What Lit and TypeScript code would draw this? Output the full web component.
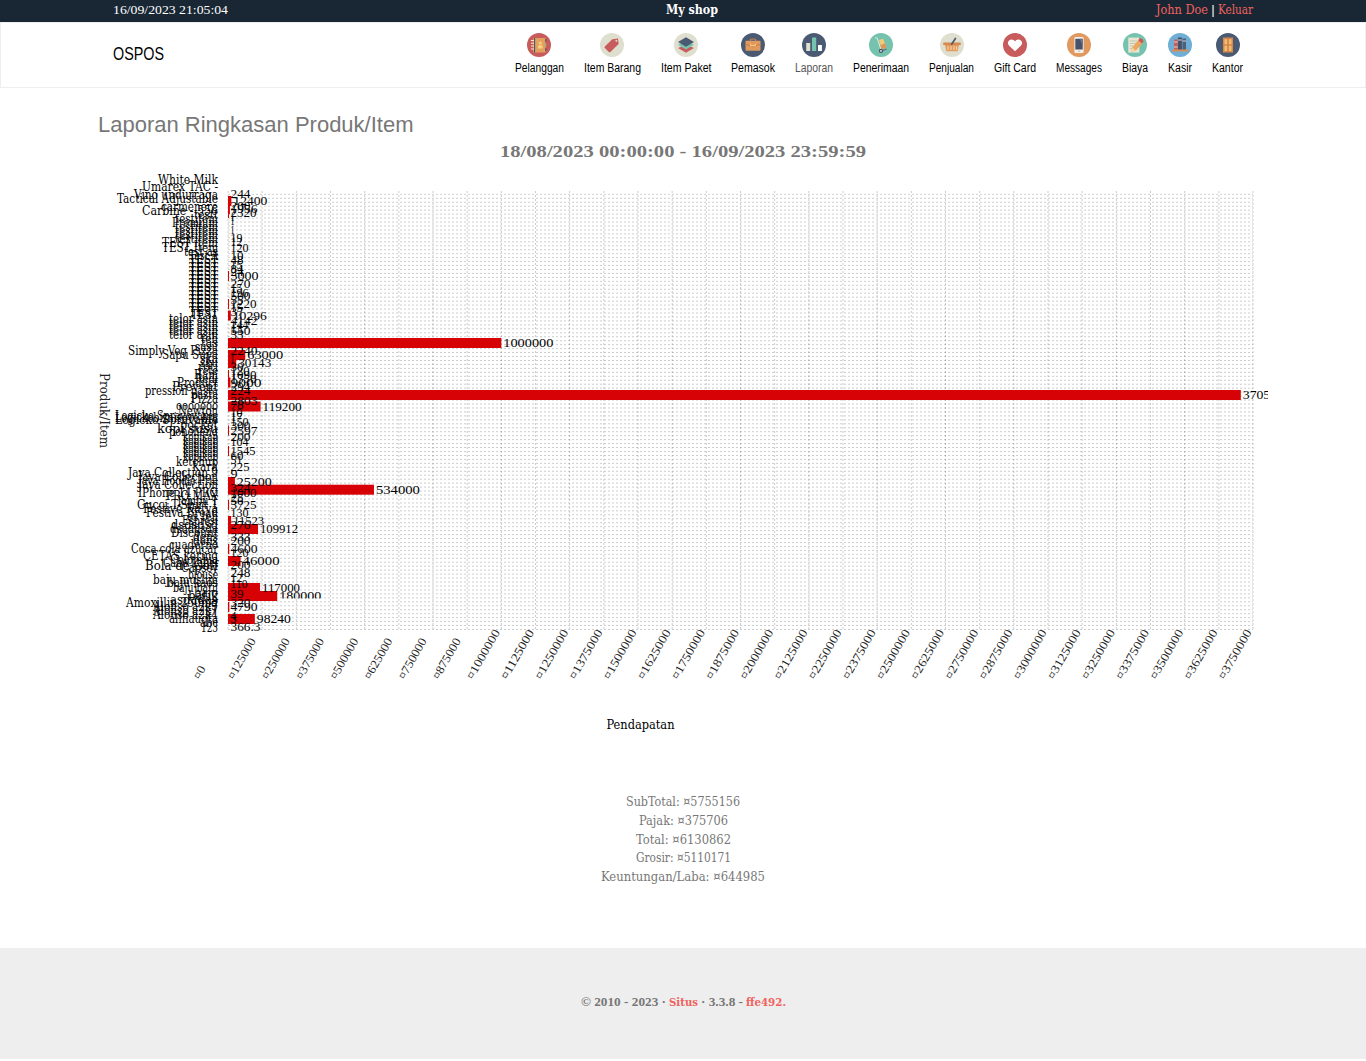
import { LitElement, html, svg, css } from "lit";
import { customElement } from "lit/decorators.js";

const bag = svg`<path d="M9.4 8V6.1h5.2V8" fill="none" stroke="#c9874d"/><rect x="4.5" y="7.7" width="15" height="10" rx=".8" fill="#e0995e"/><path d="M4.5 11.5q7.5 3 15 0" stroke="#c97d43" fill="none"/><path d="M9.5 10.8v1.7h5v-1.7" stroke="#f7ce79" fill="none"/>`;

const NAV: { name: string; w: number; bg: string; art: unknown; dim?: boolean }[] = [
  { name: "Pelanggan", w: 49, bg: "#c85c5c", art: svg`<rect x="6" y="5" width="12.5" height="14.5" rx=".8" fill="#e3a05f"/><path d="M7.5 5v14.5" stroke="#4b566d" stroke-width="1.2"/><path d="M4 7.5h3M4 10.2h3M4 13h3M4 16h3" stroke="#f1ead8"/><path d="M18.8 6v3M18.8 15v3" stroke="#4b566d"/><path d="M18.8 10.5v3" stroke="#75c3ae"/><circle cx="13.3" cy="10" r="1.6" fill="#f8cf7b"/><path d="M11 15.5v-2.5q2.3-2 4.6 0v2.5z" fill="#f8cf7b"/>` },
  { name: "Item Barang", w: 57, bg: "#dfdfcf", art: svg`<path d="M12.3 6.2 18 5.5l.6 5.4-8.2 8.1q-.8.7-1.6 0l-4-4q-.7-.8 0-1.6z" fill="#c85c5c"/><circle cx="16.4" cy="7.8" r="1" fill="#dfdfcf"/>` },
  { name: "Item Paket", w: 50.5, bg: "#dfdfcf", art: svg`<path d="m4 15 8-3.5 8 3.5-8 4.7z" fill="#c85c5c"/><path d="m4 11.8 8-4 8 4-8 4.7z" fill="#75c3ae"/><path d="m4 8.9 8-4.6 8 4.6-8 4.8z" fill="#4b5a73"/>` },
  { name: "Pemasok", w: 44, bg: "#4b5a73", art: bag },
  { name: "Laporan", w: 38, bg: "#4b5a73", dim: true, art: svg`<rect x="4.2" y="10" width="4" height="8" fill="#dfdfcf"/><rect x="10" y="4.5" width="4.2" height="13.5" fill="#75c3ae"/><rect x="16" y="12" width="3.9" height="6" fill="#fff"/>` },
  { name: "Penerimaan", w: 56, bg: "#75c3ae", art: svg`<path d="m10 7 4-1.2 2.2 5.2-4.5 1.8z" fill="#f2cc72"/><path d="m11.2 12.2 4.5-2 2 4.5-5 1.8z" fill="#e2975a"/><path d="M6.2 4.7 8.2 5.2 12 16.8" fill="none" stroke="#eceadc"/><path d="m13 17.8 4.6-1.7" stroke="#555f6e"/><circle cx="12" cy="17.9" r="1.5" fill="#eee" stroke="#41506a" stroke-width="1.2"/>` },
  { name: "Penjualan", w: 45, bg: "#dfdfcf", art: svg`<path d="M4.8 11h14.4l-1.5 7.2H6.3z" fill="#e39a5f"/><rect x="3.2" y="9.4" width="17.6" height="2.7" rx=".5" fill="#d78a4d"/><path d="M8 13.2v3.8M11 13.2v3.8M14 13.2v3.8M16.7 13.2v3.8" stroke="#f6ddb2"/><path d="m11.8 11 3.6-5.5" stroke="#4b5a73" stroke-width="1.7" stroke-linecap="round"/>` },
  { name: "Gift Card", w: 42, bg: "#c85c5c", art: svg`<path d="M12 18.2 6.4 13Q3.6 10 6 7.6q3.2-2.4 6 .7 2.8-3.1 6-.7 2.4 2.4-.4 5.4z" fill="#fff"/>` },
  { name: "Messages", w: 46, bg: "#e0995e", art: svg`<rect x="7.4" y="4" width="9.2" height="16" rx="1.3" fill="#f3f0ec"/><path d="M8.3 5.8h7.4v10.7H8.3z" fill="#46526b"/><path d="m12.5 5.8 3.2 7V5.8z" fill="#6b7588"/><circle cx="12" cy="18.2" r=".7" fill="#a9acb0"/>` },
  { name: "Biaya", w: 26, bg: "#75c3ae", art: svg`<path d="M5.3 4.6h11v15h-11z" fill="#e8e5d3"/><path d="M7 8h7M7 10.5h6M7 13h3M7 15.5h3" stroke="#b9baa7" stroke-width=".8"/><path d="m9.2 14.5 6.7-8.1 4 3.4-7 7.8-4.5 1.1z" fill="#eda65d"/><path d="m15.2 7.2 1.7-2.1q2.9.3 3.8 3.1l-1.8 2.2z" fill="#c85c5c"/><path d="m9.2 14.5 3.4 3.1-4.2 1.1z" fill="#f5d6a0"/>` },
  { name: "Kasir", w: 24, bg: "#6fafd6", art: svg`<rect x="6" y="6.5" width="3.7" height="10.5" fill="#c85c5c"/><rect x="9.9" y="4.5" width="4" height="12.5" fill="#44516a"/><rect x="14.4" y="5.5" width="3.6" height="11.5" fill="#50607a"/><path d="M6 9h3.7M6 14h3.7M9.9 7h4M14.4 8h3.6" stroke="#eee" stroke-width=".8"/><rect x="3.8" y="16.5" width="16.4" height="2" fill="#d98f52"/>` },
  { name: "Kantor", w: 31, bg: "#4b5a73", art: svg`<rect x="7" y="4.5" width="10" height="15" fill="#d8884a"/><path d="M8.5 6.2h2.8v5H8.5zm4.2 0h2.8v5h-2.8zm-4.2 6.5h2.8v5.2H8.5zm4.2 0h2.8v5.2h-2.8z" fill="#f3bd71"/><path d="M12 4.5v15" stroke="#c27a42" stroke-width=".6"/>` },
];

/* Rows of the chart: vertical centre, text, drawn width. */
type Row = [number, string, number];

const LABELS: Row[] = [
  [180, "White Milk", 60], [187, "Umarex TAC -", 76], [195, "Vino undurraga", 84], [199, "Tactical Adjustable", 101],
  [207, "carmenere", 57], [211, "Carbine - 556", 76], [215, "testt", 24], [219, "testitem", 43], [223, "Premium", 46],
  [227, "testitem", 43], [231, "testitem", 43], [235, "testitem", 43], [239, "testitem", 43], [243, "TEST item", 56],
  [248, "TEST Item", 56], [252, "test as", 34], [256, "Test A", 29],
  [260, "TEST", 29], [264, "TEST", 29], [268, "TEST", 29], [272, "TEST", 29], [276, "TEST", 29], [280, "TEST", 29],
  [284, "TEST", 29], [288, "TEST", 29], [292, "TEST", 29], [296, "TEST", 29], [300, "TEST", 29], [304, "TEST", 29],
  [308, "TEST", 29], [312, "TEST", 29], [315, "TEST", 27], [319, "telor asin", 49], [323, "telor asin", 49],
  [327, "telor asin", 49], [331, "telor asin", 49], [335, "telor asin", 49], [339, "teh", 17], [343, "tas", 17],
  [347, "susu", 23], [351, "Simply Veg Pizza", 90], [355, "Sapu Suya", 56], [359, "ska", 18], [363, "sku", 18],
  [367, "roti", 20], [371, "rete", 20], [375, "Ram", 24], [379, "Redi", 23], [383, "Product", 41], [387, "Prevent", 46],
  [391, "pression pasta", 73], [395, "pasta", 27], [399, "Pizza", 27], [406, "ooooooo", 42], [411, "Newton", 40],
  [416, "Logicko Spravovanie", 103], [418, "Logickobiznisove hra", 103], [420, "Logicko Spravanie", 103], [425, "pocket", 38],
  [429, "kopi susu", 61], [432, "pohoheng", 49], [437, "kopikap", 35], [441, "kopikap", 35], [445, "kopikap", 35],
  [449, "kopikap", 35], [453, "kopikap", 35], [457, "kopikap", 35], [462, "ketchup", 42], [467, "Kara", 26],
  [473, "Java Collection 9", 90], [477, "Java Collection", 80], [481, "Java Hoodie Pria", 80], [485, "Java Collection", 80],
  [493, "IPhone 14 PRO", 80], [496, "PRO MAX", 52], [501, "lampu T", 40], [505, "Gucci T-Shirt 1", 81],
  [509, "Festive Kutya", 75], [513, "Festiva Bread", 72], [517, "es teh", 31], [521, "Espresi", 36], [525, "dsdsdsd", 47],
  [529, "dsadasda", 48], [533, "Discount", 47], [537, "dens", 25], [541, "dens", 25], [545, "cuaderno", 49],
  [549, "Coca cola azucar", 87], [556, "CETAS kering", 75], [560, "Colombia", 48], [563, "Cabo Label", 55],
  [566, "Bola de Golf", 73], [568, "Capsey", 37], [575, "blouse", 30], [580, "baju muslim", 65],
  [583, "baju kaos", 51], [588, "baju batu", 45], [593, "bajo", 24], [596, "batik", 30], [600, "asdadas", 48],
  [603, "Amoxillin 250mg", 92], [607, "Alonso a2k7", 65], [611, "Alonso a2k7", 65], [615, "Alonso a2k4", 65],
  [619, "alifiauqta", 49], [623, "abc", 18], [628, "123", 17],
];

const VALUES: Row[] = [
  [194, "244", 20], [206, "200", 20], [209, "1956", 27], [213, "2320", 26], [217, "1", 4], [221, "1", 4], [230, "1", 4],
  [238, "19", 12], [242, "12", 12], [248, "120", 18], [256, "10", 13], [260, "48", 13], [265, "15", 12], [269, "84", 13],
  [272, "24", 13], [276, "3000", 28], [284, "270", 20], [288, "15", 12], [293, "196", 18], [296, "500", 20], [300, "55", 13],
  [304, "1220", 26], [308, "15", 12], [312, "37", 13], [321, "4142", 27], [325, "144", 18], [329, "13", 12],
  [331, "550", 20], [335, "33", 13], [351, "2240", 27], [359, "1", 4], [367, "30", 13], [371, "120", 19], [375, "1090", 26],
  [379, "1350", 26], [383, "9000", 31], [387, "294", 20], [391, "224", 20], [401, "2803", 27], [405, "78", 13],
  [413, "10", 12], [417, "17", 12], [422, "150", 18], [426, "300", 20], [431, "2597", 27], [437, "200", 20], [442, "104", 18],
  [451, "1545", 25], [456, "60", 13], [460, "51", 12], [467, "225", 19], [474, "9", 7], [488, "324", 20], [493, "1000", 26],
  [498, "25", 13], [501, "56", 13], [505, "3725", 26], [513, "130", 18], [525, "276", 20], [537, "333", 20], [541, "200", 20],
  [549, "4600", 27], [553, "120", 18], [565, "200", 20], [573, "248", 20], [578, "12", 12], [584, "110", 17], [594, "39", 13],
  [603, "320", 20], [607, "4790", 27], [616, "4", 6], [619, "3", 6], [627, "366.3", 30],
];

/* Bars: vertical centre, value, label, label width. */
const BARS: [number, number, string, number][] = [
  [201, 12400, "12400", 34], [209, 6956, "", 0], [213, 2320, "", 0], [276, 3000, "", 0], [304, 1220, "", 0],
  [315.5, 10296, "10296", 34], [343, 1000000, "1000000", 50], [355, 63000, "63000", 36], [363, 30143, "30143", 33],
  [375, 1090, "", 0], [382.5, 9000, "", 0], [395, 3705400, "3705400", 48], [406.5, 119200, "119200", 39],
  [430.5, 2597, "", 0], [451, 1545, "", 0], [482, 25200, "25200", 35], [489.7, 534000, "534000", 44],
  [505, 3725, "", 0], [521, 11523, "11523", 31], [529, 109912, "109912", 38], [549, 4600, "", 0],
  [561, 46000, "46000", 37], [588, 117000, "117000", 38], [596, 180000, "180000", 42], [607, 4790, "", 0], [619, 98240, "98240", 34],
];

const X0 = 130, W = 1025, MAX = 3750000, TOP = 168;
const STEPS = Array.from({ length: 31 }, (_, i) => i);
const ROWS = Array.from({ length: 111 }, (_, i) => i);

const fit = (s: string, w: number, size: number, baseline: number, cls = "") => html`
  <svg class="fit ${cls}" width=${w} height="20"><text x="0" y=${baseline} font-size=${size} textLength=${w} lengthAdjust="spacingAndGlyphs">${s}</text></svg>`;

@customElement("app-root")
export class AppRoot extends LitElement {
  static styles = css`
    :host { display: block; height: 1061px; background: #fff; color: #777; font-family: "Liberation Serif", Georgia, serif; }
    .fit { display: block; overflow: visible; fill: currentColor; flex: none; }
    .top { height: 22px; background: #192735; color: #fff; }
    .bar { width: 1140px; margin: 0 auto; display: grid; grid-template-columns: 1fr auto 1fr; }
    .shop { margin-left: 18px; }
    .user { display: flex; justify-content: flex-end; gap: 3px; }
    .link { color: #f0625f; }
    .bold { font-weight: bold; }
    .wide { font-family: "DejaVu Serif Condensed", "DejaVu Serif", serif; }
    .nav { height: 66px; box-sizing: border-box; border: 1px solid #eee; color: #000; }
    .inner { width: 1140px; margin: 0 auto; display: flex; justify-content: space-between; font-family: "Liberation Sans Narrow", "Liberation Sans", sans-serif; }
    .brand { padding-top: 20px; }
    .menu { display: flex; gap: 20px; padding: 10px 10px 0 0; }
    .item { display: flex; flex-direction: column; align-items: center; gap: 2px; }
    .dim { color: #555; }
    .main { width: 1170px; margin: 0 auto; height: 860px; }
    .title { padding-top: 24px; height: 30px; font-family: "Liberation Sans", sans-serif; }
    .range { display: flex; justify-content: center; height: 26px; }
    .chart { display: block; overflow: hidden; fill: #000; font-size: 12.5px; }
    .label { font-family: "DejaVu Serif Condensed", "DejaVu Serif", serif; font-size: 12.5px; }
    .tick { fill: #222; font-size: 12px; }
    .sums { display: flex; flex-direction: column; align-items: center; padding-top: 45px; }
    .sum { height: 18.75px; }
    .foot { height: 111px; background: #eee; display: flex; justify-content: center; gap: 3px; padding-top: 44px; box-sizing: border-box; }
  `;

  private chart() {
    const y = (v: number) => v - TOP;
    return svg`
      <g stroke="#000" stroke-opacity=".2" stroke-dasharray="2 2">
        ${STEPS.map(i => svg`<line x1=${X0 + (i * W) / 30} x2=${X0 + (i * W) / 30} y1=${y(191)} y2=${y(629.5)}/>`)}
        ${ROWS.map(i => svg`<line x1=${X0} x2=${X0 + W} y1=${y(629.5 - i * 3.956)} y2=${y(629.5 - i * 3.956)}/>`)}
      </g>
      ${BARS.map(([c, v]) => svg`<rect x=${X0} y=${y(c - 5)} width=${Math.max(1, (v / MAX) * W)} height="10" fill="#d70206"/>`)}
      ${LABELS.map(([c, s, w]) => svg`<text class="label" x=${120 - w} y=${y(c + 4)} textLength=${w} lengthAdjust="spacingAndGlyphs">${s}</text>`)}
      <clipPath id="cut"><rect x="0" y="0" width="1170" height=${y(598.5)}/></clipPath>
      ${BARS.filter(b => b[2]).map(([c, v, s, w]) => svg`<text x=${X0 + 2 + (v / MAX) * W} y=${y(c + 4)} textLength=${w} lengthAdjust="spacingAndGlyphs" clip-path=${s === "180000" ? "url(#cut)" : "none"}>${s}</text>`)}
      ${VALUES.map(([c, s, w]) => svg`<text x="132.5" y=${y(c + 4)} textLength=${w} lengthAdjust="spacingAndGlyphs">${s}</text>`)}
      ${STEPS.map(i => {
        const s = "¤" + i * 125000;
        const w = i === 0 ? 13 : s.length === 7 ? 45 : 55;
        return svg`<text class="tick" transform="translate(${101.5 + (i * W) / 30} ${y(680)}) rotate(-60)" textLength=${w} lengthAdjust="spacingAndGlyphs">${s}</text>`;
      })}
      <text class="label tick" transform="translate(1.5 ${y(373)}) rotate(90)" textLength="75" lengthAdjust="spacingAndGlyphs">Produk/Item</text>
      <text class="label" x="508.5" y=${y(729)} textLength="68" lengthAdjust="spacingAndGlyphs">Pendapatan</text>`;
  }

  render() {
    const sums: [string, number][] = [["SubTotal: ¤5755156", 114], ["Pajak: ¤375706", 89], ["Total: ¤6130862", 95], ["Grosir: ¤5110171", 95], ["Keuntungan/Laba: ¤644985", 164]];
    return html`
      <header class="top"><div class="bar">
        <div>${fit("16/09/2023 21:05:04", 115, 13, 14)}</div>
        <div class="shop">${fit("My shop", 52, 12, 14, "bold wide")}</div>
        <div class="user">${fit("John Doe", 52, 12.5, 14, "link wide")}${fit("|", 4, 12, 14)}${fit("Keluar", 35, 12.5, 14, "link wide")}</div>
      </div></header>
      <nav class="nav"><div class="inner">
        <div class="brand">${fit("OSPOS", 51, 18, 17)}</div>
        <div class="menu">${NAV.map(n => html`<div class="item ${n.dim ? "dim" : ""}">
          <svg width="24" height="24" viewBox="0 0 24 24"><circle cx="12" cy="12" r="12" fill=${n.bg}/>${n.art}</svg>
          ${fit(n.name, n.w, 12, 13)}</div>`)}</div>
      </div></nav>
      <main class="main">
        <div class="title">${fit("Laporan Ringkasan Produk/Item", 315.5, 22, 20)}</div>
        <div class="range">${fit("18/08/2023 00:00:00 - 16/09/2023 23:59:59", 366, 17, 15, "bold")}</div>
        <svg class="chart" width="1170" height="580">${this.chart()}</svg>
        <div class="sums">${sums.map(([s, w]) => html`<div class="sum">${fit(s, w, 13.5, 13, "wide")}</div>`)}</div>
      </main>
      <footer class="foot">${fit("© 2010 - 2023 ·", 85, 12, 14, "bold")}${fit("Situs", 29, 11, 14, "link bold wide")}${fit("· 3.3.8 -", 42, 12, 14, "bold")}${fit("ffe492.", 40, 11, 14, "link bold wide")}</footer>`;
  }
}
